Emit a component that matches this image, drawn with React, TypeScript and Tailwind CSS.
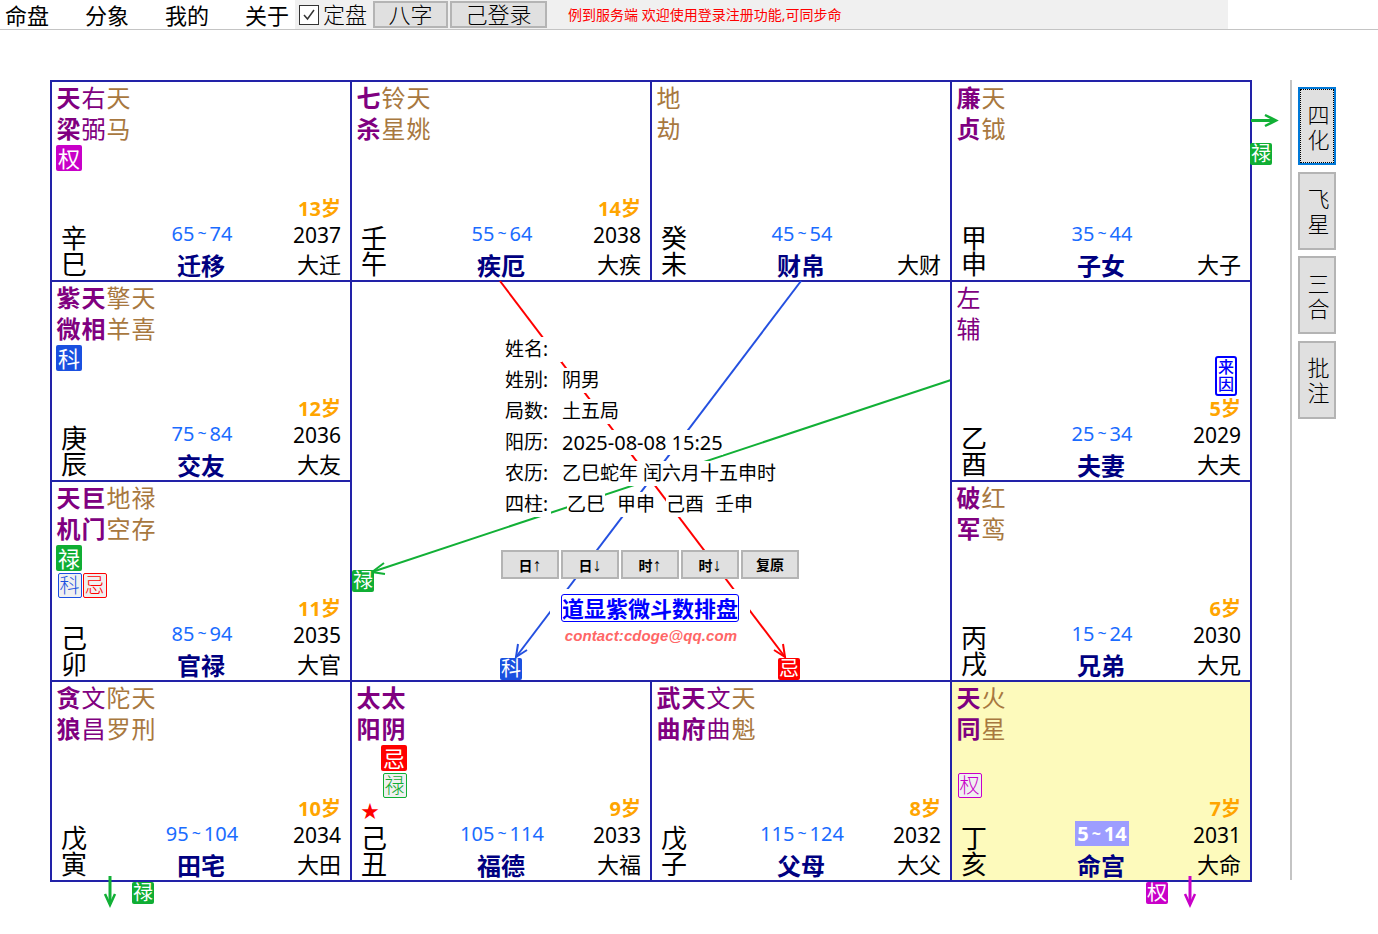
import React from "react";

type Tag = { text: string; color: "lu" | "quan" | "ke" | "ji"; outline?: boolean };
type Star = { chars: string; kind: "main" | "soft" | "misc"; tagA?: Tag; tagB?: Tag };
type Palace = {
  stars: Star[];
  stem: string;
  branch: string;
  range: [string, string];
  age?: string;
  year: string;
  name: string;
  big: string;
  current?: boolean;
  mark?: boolean;
  cause?: boolean;
};

const filled = {
  lu: "bg-[#10ae34] text-white",
  quan: "bg-[#c800c8] text-white",
  ke: "bg-[#1a50e0] text-white",
  ji: "bg-[#ff0000] text-white",
};

const outlined = {
  lu: "border-[#10ae34] text-[#10ae34]",
  quan: "border-[#c800c8] text-[#c800c8]",
  ke: "border-[#1a50e0] text-[#1a50e0]",
  ji: "border-[#ff0000] text-[#ff0000]",
};

const starColor = {
  main: "text-[#800080] font-bold",
  soft: "text-[#800080]",
  misc: "text-[#a8783f]",
};

const palaces: Palace[] = [
  {
    stars: [
      { chars: "天梁", kind: "main", tagA: { text: "权", color: "quan" } },
      { chars: "右弼", kind: "soft" },
      { chars: "天马", kind: "misc" },
    ],
    stem: "辛", branch: "巳", range: ["65", "74"], age: "13岁", year: "2037", name: "迁移", big: "大迁",
  },
  {
    stars: [
      { chars: "七杀", kind: "main" },
      { chars: "铃星", kind: "misc" },
      { chars: "天姚", kind: "misc" },
    ],
    stem: "壬", branch: "午", range: ["55", "64"], age: "14岁", year: "2038", name: "疾厄", big: "大疾",
  },
  {
    stars: [{ chars: "地劫", kind: "misc" }],
    stem: "癸", branch: "未", range: ["45", "54"], year: "", name: "财帛", big: "大财",
  },
  {
    stars: [
      { chars: "廉贞", kind: "main" },
      { chars: "天钺", kind: "misc" },
    ],
    stem: "甲", branch: "申", range: ["35", "44"], year: "", name: "子女", big: "大子",
  },
  {
    stars: [
      { chars: "紫微", kind: "main", tagA: { text: "科", color: "ke" } },
      { chars: "天相", kind: "main" },
      { chars: "擎羊", kind: "misc" },
      { chars: "天喜", kind: "misc" },
    ],
    stem: "庚", branch: "辰", range: ["75", "84"], age: "12岁", year: "2036", name: "交友", big: "大友",
  },
  {
    stars: [{ chars: "左辅", kind: "soft" }],
    stem: "乙", branch: "酉", range: ["25", "34"], age: "5岁", year: "2029", name: "夫妻", big: "大夫", cause: true,
  },
  {
    stars: [
      {
        chars: "天机",
        kind: "main",
        tagA: { text: "禄", color: "lu" },
        tagB: { text: "科", color: "ke", outline: true },
      },
      { chars: "巨门", kind: "main", tagB: { text: "忌", color: "ji", outline: true } },
      { chars: "地空", kind: "misc" },
      { chars: "禄存", kind: "misc" },
    ],
    stem: "己", branch: "卯", range: ["85", "94"], age: "11岁", year: "2035", name: "官禄", big: "大官",
  },
  {
    stars: [
      { chars: "破军", kind: "main" },
      { chars: "红鸾", kind: "misc" },
    ],
    stem: "丙", branch: "戌", range: ["15", "24"], age: "6岁", year: "2030", name: "兄弟", big: "大兄",
  },
  {
    stars: [
      { chars: "贪狼", kind: "main" },
      { chars: "文昌", kind: "soft" },
      { chars: "陀罗", kind: "misc" },
      { chars: "天刑", kind: "misc" },
    ],
    stem: "戊", branch: "寅", range: ["95", "104"], age: "10岁", year: "2034", name: "田宅", big: "大田",
  },
  {
    stars: [
      { chars: "太阳", kind: "main" },
      {
        chars: "太阴",
        kind: "main",
        tagA: { text: "忌", color: "ji" },
        tagB: { text: "禄", color: "lu", outline: true },
      },
    ],
    stem: "己", branch: "丑", range: ["105", "114"], age: "9岁", year: "2033", name: "福德", big: "大福", mark: true,
  },
  {
    stars: [
      { chars: "武曲", kind: "main" },
      { chars: "天府", kind: "main" },
      { chars: "文曲", kind: "soft" },
      { chars: "天魁", kind: "misc" },
    ],
    stem: "戊", branch: "子", range: ["115", "124"], age: "8岁", year: "2032", name: "父母", big: "大父",
  },
  {
    stars: [
      { chars: "天同", kind: "main", tagB: { text: "权", color: "quan", outline: true } },
      { chars: "火星", kind: "misc" },
    ],
    stem: "丁", branch: "亥", range: ["5", "14"], age: "7岁", year: "2031", name: "命宫", big: "大命", current: true,
  },
];

function Stars({ stars }: { stars: Star[] }) {
  return (
    <div className="flex h-[118px] pl-[4px]">
      {stars.map((s) => (
        <div key={s.chars} className="flex w-[25px] flex-col items-center">
          <span className={`h-[31px] text-[24px] leading-[31px] ${starColor[s.kind]}`}>{s.chars[0]}</span>
          <span className={`h-[31px] text-[24px] leading-[31px] ${starColor[s.kind]}`}>{s.chars[1]}</span>
          <div className="ml-[1px] mt-[1px] h-[28px]">
            {s.tagA && (
              <span className={`flex h-[26px] w-[26px] items-center justify-center rounded-[2px] text-[22px] leading-none ${filled[s.tagA.color]}`}>
                {s.tagA.text}
              </span>
            )}
          </div>
          {s.tagB && (
            <span className={`ml-[2px] flex h-[25px] w-[24px] items-center justify-center rounded-[2px] border bg-[#f0f0f0] text-[20px] font-light leading-none ${outlined[s.tagB.color]}`}>
              {s.tagB.text}
            </span>
          )}
        </div>
      ))}
    </div>
  );
}

function Cell({ p }: { p: Palace }) {
  return (
    <div className={`relative flex h-[200px] w-[300px] flex-col border-b-2 border-r-2 border-[#2222a8] ${p.current ? "bg-[#fdfabc]" : ""}`}>
      <Stars stars={p.stars} />
      {p.cause && (
        <div className="absolute right-[13px] top-[74px] flex h-[40px] w-[22px] flex-col items-center justify-center rounded-[3px] border-2 border-[#0000ff] text-[16px] font-medium leading-[17px] text-[#0000ff]">
          <span>来</span>
          <span>因</span>
        </div>
      )}
      <div className="mt-auto flex h-[80px] items-start">
        <div className="flex w-[99px] flex-col pl-[9px] pt-[25px] text-[26px] leading-[26px] text-black">
          {p.mark && <span className="absolute left-[9px] top-[120px] text-[18px] leading-[18px] text-[#ff0000]">★</span>}
          <span>{p.stem}</span>
          <span>{p.branch}</span>
        </div>
        <div className="flex w-[100px] flex-col items-center pt-[21px]">
          <span className={`ml-[2px] flex h-[25px] items-center whitespace-nowrap px-[2px] text-[20px] leading-[25px] ${p.current ? "bg-[#9d9dff] font-bold text-white" : "text-[#1a6cff]"}`}>
            {p.range[0]}
            <span className="mx-[3px] text-[16px]">~</span>
            {p.range[1]}
          </span>
          <span className="mt-[6px] text-[24px] font-bold leading-[28px] text-[#000080]">{p.name}</span>
        </div>
        <div className="flex w-[99px] flex-col items-end pr-[9px]">
          <span className="-mt-[1px] h-[21px] text-[20px] font-bold leading-[20px] text-[#ffa500]">{p.age}</span>
          <span className="h-[30px] text-[21px] leading-[30px] text-black">{p.year}</span>
          <span className="-mt-[1px] text-[22px] leading-[30px] text-black">{p.big}</span>
        </div>
      </div>
    </div>
  );
}

function InfoRow({ label, value, wide }: { label: string; value: string; wide?: boolean }) {
  return (
    <div className="flex h-[31px] items-start pl-[153px] text-[19px] leading-[25px] text-black">
      <span className="w-[57px] whitespace-nowrap bg-white">{label}</span>
      <span className={`whitespace-nowrap bg-white ${wide ? "text-[20px]" : ""}`}>{value}</span>
    </div>
  );
}

function Center() {
  return (
    <div className="relative z-10 col-span-2 row-span-2 flex flex-col border-b-2 border-r-2 border-[#2222a8] pt-[55px]">
      <InfoRow label="姓名:" value="" />
      <InfoRow label="姓别:" value="阴男" />
      <InfoRow label="局数:" value="土五局" />
      <InfoRow label="阳历:" value="2025-08-08 15:25" wide />
      <InfoRow label="农历:" value="乙巳蛇年 闰六月十五申时" />
      <div className="flex h-[25px] items-start pl-[153px] text-[19px] leading-[25px] text-black">
        <span className="w-[46px] bg-white">四柱:</span>
        <span className="ml-[16px] bg-white">乙巳</span>
        <span className="ml-[12px] bg-white">甲申</span>
        <span className="ml-[11px] bg-white">己酉</span>
        <span className="ml-[11px] bg-white">壬申</span>
      </div>
      <div className="mt-[33px] flex gap-[2px] self-start pl-[149px]">
        {[["日", "↑"], ["日", "↓"], ["时", "↑"], ["时", "↓"], ["复原", ""]].map(([t, arrow]) => (
          <button key={t + arrow} className="h-[29px] w-[58px] border-2 border-[#b4b4b4] bg-[#e0e0e0] font-['Liberation_Sans','Noto_Sans_CJK_SC',sans-serif] text-[14px] font-bold leading-none text-black">
            {t}
            {arrow && <span className="text-[18px] font-normal leading-none">{arrow}</span>}
          </button>
        ))}
      </div>
      <div className="ml-[198px] mt-[10px] flex w-[200px] flex-col items-center self-start bg-white">
        <div className="mt-[5px] rounded-[3px] border border-[#0000ff] text-[22px] font-bold leading-[26px] text-[#0000ff]">
          道显紫微斗数排盘
        </div>
        <div className="mt-[3px] pl-[2px] font-['Liberation_Sans'] text-[15px] font-bold italic leading-[22px] tracking-[0.1px] text-[#ff6666]">
          contact:cdoge@qq.com
        </div>
      </div>
    </div>
  );
}

function SmallTag({ text, cls }: { text: string; cls: string }) {
  return (
    <span className={`absolute flex h-[22px] w-[22px] items-center justify-center rounded-[2px] text-[20px] leading-none text-white ${cls}`}>
      {text}
    </span>
  );
}

function Arrows() {
  return (
    <svg className="pointer-events-none absolute left-0 top-0" width="1378" height="934" fill="none" strokeWidth="2">
      <g stroke="#ff0000">
        <path d="M500 281L785 657" />
        <path d="M774 650L785 657L783 644" />
      </g>
      <g stroke="#2450e0">
        <path d="M801 281L516 657" />
        <path d="M518 644L516 657L527 650" />
      </g>
      <g stroke="#12b036">
        <path d="M951 380L372 572" />
        <path d="M384 563L372 572L385 574" />
        <path d="M1251 120.500H1275" strokeWidth="3" />
        <path d="M1265 115L1276 120.500L1265 126" strokeWidth="2.500" />
        <path d="M110 876V904" strokeWidth="3" />
        <path d="M105 894L110 905L115 894" strokeWidth="2.500" />
      </g>
      <g stroke="#c800c8">
        <path d="M1190 876V904" strokeWidth="3" />
        <path d="M1185 894L1190 905L1195 894" strokeWidth="2.500" />
      </g>
    </svg>
  );
}

function SideButton({ text, active }: { text: string; active?: boolean }) {
  return (
    <button className={`flex h-[78px] w-[38px] flex-col items-center justify-center border-2 bg-[#e0e0e0] pl-[3px] pt-[1px] text-[22px] font-light leading-[25px] text-black ${active ? "border-[#0078d7] outline-1 -outline-offset-3 outline-dotted outline-black" : "border-[#b4b4b4]"}`}>
      <span>{text[0]}</span>
      <span>{text[1]}</span>
    </button>
  );
}

export default function App() {
  const cells = palaces.map((p) => <Cell key={p.name} p={p} />);
  return (
    <div className="relative h-[934px] w-[1378px] overflow-hidden bg-white font-['Noto_Sans','Noto_Sans_CJK_SC',sans-serif]">
      <div className="flex h-[30px] items-start border-b border-[#c4c4c4]">
        <div className="flex h-[29px] w-[295px] items-center gap-[36px] pl-[5px] text-[22px] leading-none text-black">
          <span>命盘</span>
          <span>分象</span>
          <span>我的</span>
          <span>关于</span>
        </div>
        <div className="flex h-[29px] w-[933px] items-center bg-[#f0f0f0]">
          <span className="ml-[4px] flex h-[20px] w-[20px] items-center justify-center border border-[#333333] bg-white">
            <svg width="16" height="16" viewBox="0 0 16 16" fill="none" stroke="#333333" strokeWidth="1.500">
              <path d="M3 8L6.500 12L13 3" />
            </svg>
          </span>
          <span className="ml-[4px] pb-[1px] text-[22px] font-light leading-none text-black">定盘</span>
          <button className="ml-[6px] h-[27px] w-[75px] border-2 border-[#b4b4b4] bg-[#e0e0e0] pb-[3px] text-[22px] font-light leading-none text-black">八字</button>
          <button className="ml-[2px] h-[27px] w-[97px] border-2 border-[#b4b4b4] bg-[#e0e0e0] pb-[3px] text-[22px] font-light leading-none text-black">己登录</button>
          <span className="ml-[21px] text-[14px] text-[#ff0000]">例到服务端 欢迎使用登录注册功能,可同步命</span>
        </div>
      </div>
      <div className="mt-[50px] flex items-start pl-[50px]">
        <div className="grid w-[1202px] grid-cols-[300px_300px_300px_300px] grid-rows-[200px_200px_200px_200px] border-l-2 border-t-2 border-[#2222a8]">
          {cells.slice(0, 5)}
          <Center />
          {cells.slice(5)}
        </div>
        <div className="ml-[38px] flex h-[800px] flex-col gap-[6.67px] border-l-2 border-[#c4c4c4] pl-[6px] pt-[7px]">
          <SideButton text="四化" active />
          <SideButton text="飞星" />
          <SideButton text="三合" />
          <SideButton text="批注" />
        </div>
      </div>
      <Arrows />
      <SmallTag text="禄" cls="bg-[#10ae34] left-[1250px] top-[143px]" />
      <SmallTag text="禄" cls="bg-[#10ae34] left-[352px] top-[570px]" />
      <SmallTag text="科" cls="bg-[#1a50e0] left-[500px] top-[658px]" />
      <SmallTag text="忌" cls="bg-[#ff0000] left-[778px] top-[658px]" />
      <SmallTag text="禄" cls="bg-[#10ae34] left-[132px] top-[882px]" />
      <SmallTag text="权" cls="bg-[#c800c8] left-[1146px] top-[882px]" />
    </div>
  );
}
